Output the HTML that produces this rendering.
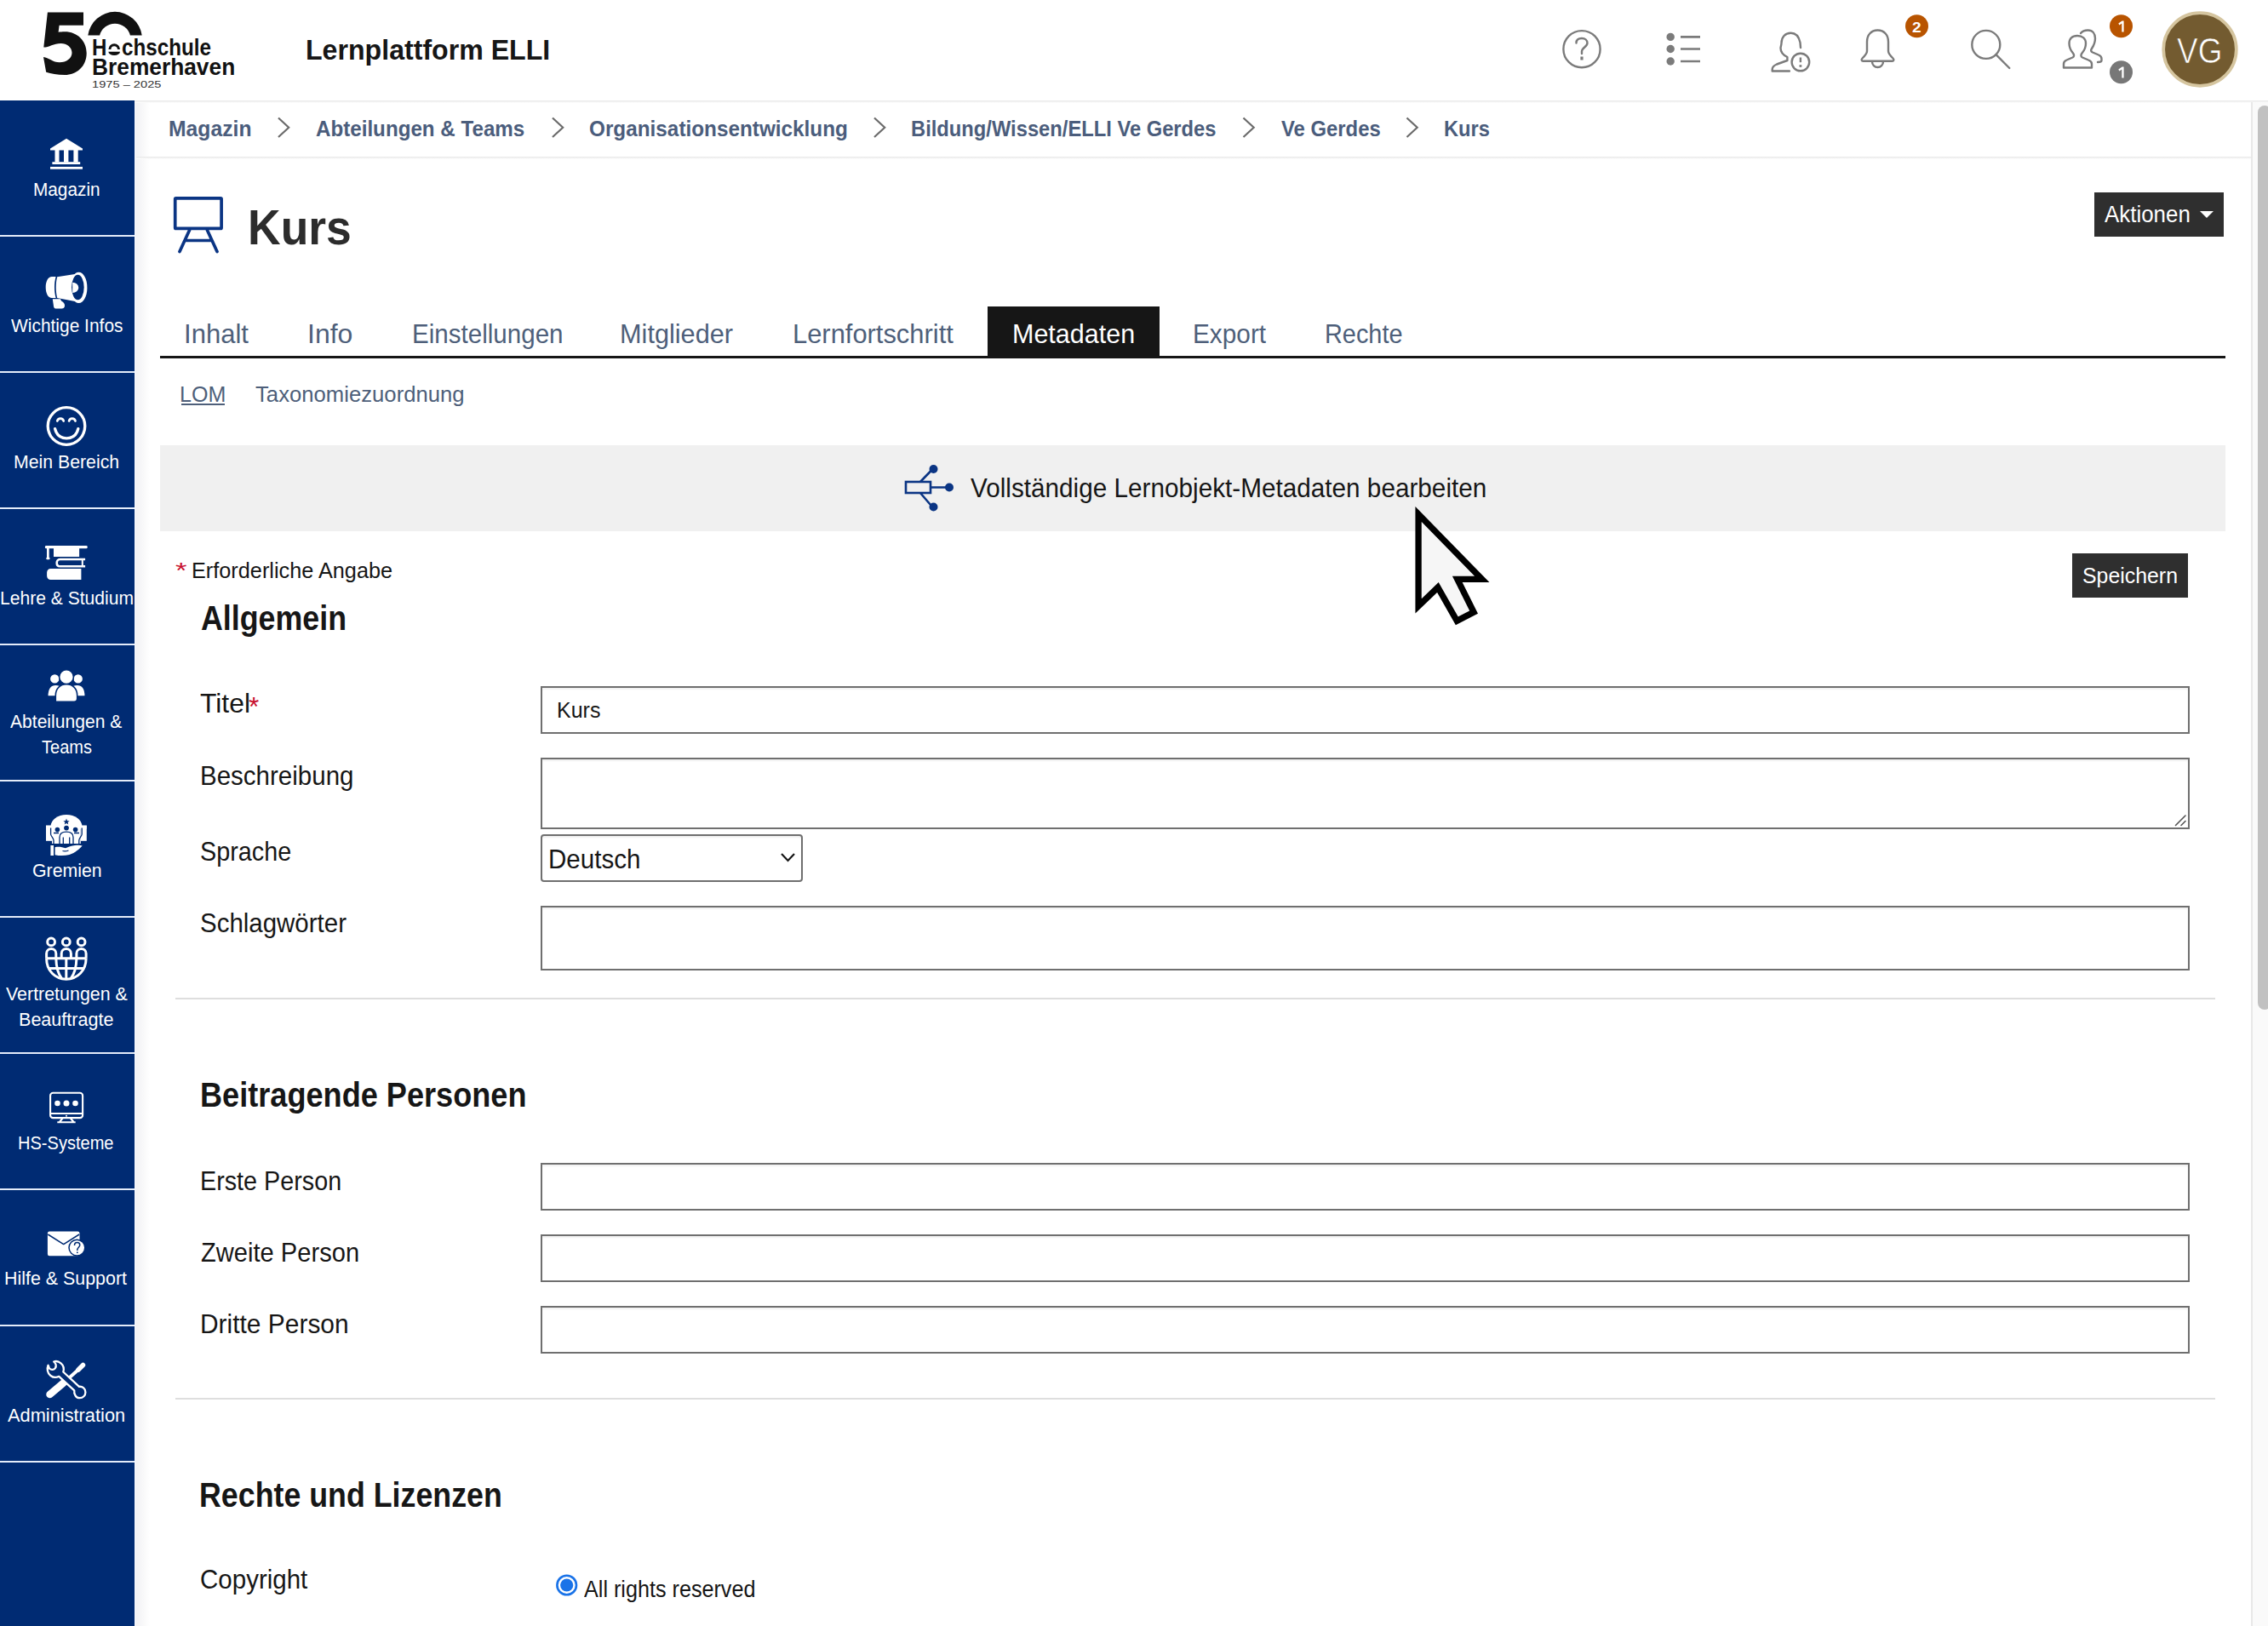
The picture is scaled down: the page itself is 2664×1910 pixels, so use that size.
<!DOCTYPE html>
<html><head><meta charset="utf-8">
<style>
*{box-sizing:border-box;margin:0;padding:0}
html,body{width:2664px;height:1910px;overflow:hidden;background:#fff}
body{position:relative;font-family:"Liberation Sans",sans-serif;color:#161616}
.b{position:absolute}
.t{position:absolute;white-space:nowrap;transform-origin:0 0;font-family:"Liberation Sans",sans-serif}
.sep{position:absolute;left:0;width:158px;height:2px;background:#e4ecfa}
.inp{position:absolute;left:635px;width:1937px;border:2px solid #6f6f6f;background:#fff;box-shadow:inset 0 2px 2px rgba(0,0,0,0.06)}
.hr{position:absolute;left:206px;width:2396px;height:2px;background:#dedede}
svg{position:absolute;left:0;top:0}
</style></head>
<body>
<!-- header shadow -->
<!-- sidebar -->
<div class="b" style="left:0;top:118px;width:158px;height:1792px;background:#002b73"></div>
<div class="sep" style="top:276px"></div>
<div class="sep" style="top:436px"></div>
<div class="sep" style="top:596px"></div>
<div class="sep" style="top:756px"></div>
<div class="sep" style="top:916px"></div>
<div class="sep" style="top:1076px"></div>
<div class="sep" style="top:1236px"></div>
<div class="sep" style="top:1396px"></div>
<div class="sep" style="top:1556px"></div>
<div class="sep" style="top:1716px"></div>
<div class="b" style="left:158px;top:118px;width:2px;height:1792px;background:#f4f6fb"></div>
<div class="b" style="left:160px;top:118px;width:16px;height:1792px;background:linear-gradient(to right,#f2f2f4,#fff)"></div>
<div class="b" style="left:158px;top:118px;width:2506px;height:3px;background:linear-gradient(#e6e6e6,#fff)"></div>
<!-- breadcrumb bottom -->
<div class="b" style="left:160px;top:184px;width:2484px;height:3px;background:linear-gradient(#e6e6e6,#fff)"></div>
<!-- aktionen -->
<div class="b" style="left:2460px;top:226px;width:152px;height:52px;background:#2f2f2f"></div>
<!-- tabs -->
<div class="b" style="left:1160px;top:360px;width:202px;height:61px;background:#161616"></div>
<div class="b" style="left:188px;top:418px;width:2426px;height:3px;background:#161616"></div>
<div class="b" style="left:212.5px;top:474px;width:51.5px;height:2px;background:#4e5f7a"></div>
<!-- grey bar -->
<div class="b" style="left:188px;top:523px;width:2426px;height:101px;background:#f0f0f0"></div>
<!-- speichern -->
<div class="b" style="left:2434px;top:650px;width:136px;height:52px;background:#2f2f2f"></div>
<!-- inputs -->
<div class="inp" style="top:806px;height:56px"></div>
<div class="inp" style="top:890px;height:84px"></div>
<div class="inp" style="top:980px;height:56px;width:308px;border-radius:4px"></div>
<div class="inp" style="top:1064px;height:76px"></div>
<div class="hr" style="top:1172px"></div>
<div class="inp" style="top:1366px;height:56px"></div>
<div class="inp" style="top:1450px;height:56px"></div>
<div class="inp" style="top:1534px;height:56px"></div>
<div class="hr" style="top:1642px"></div>
<!-- scrollbar -->
<div class="b" style="left:2644px;top:120px;width:20px;height:1790px;background:#fafafa;border-left:2px solid #e8e8e8"></div>
<div class="b" style="left:2652px;top:124px;width:16px;height:1062px;background:#c1c1c1;border-radius:8px"></div>

<svg width="2664" height="1910" viewBox="0 0 2664 1910">
<!-- logo -->
<path fill="#111" d="M55.9,14.6 L98,14.6 L98,29.8 L69.6,29.8 L68.6,37.8 C70.5,37.4 73,37.2 76,37.2 C91,37.2 101.7,48 101.7,62.5 C101.7,78 90,88 76,88 C67,88 60,86.7 54.2,84.8 L51,67 C57,67.5 62,73.3 70,73.3 C78,73.3 84.5,68.5 84.5,62 C84.5,55.5 78.5,51 71.5,51 C63,51 57.5,55.6 51.3,55.6 Z"/>
<path d="M128.9,58 A5.3,5.3 0 0 1 139.5,58" fill="none" stroke="#111" stroke-width="3"/>
<path d="M127.4,60.8 A6.8,4.3 0 0 0 141,60.8 Z" fill="#111"/>
<path fill="#111" d="M103.3,41.5 A32,32 0 0 1 166.7,41.5 L152.9,41.5 A18.5,18.5 0 0 0 117.1,41.5 Z"/>
<!-- header icons -->
<g fill="none" stroke="#7b7b7b" stroke-width="2.4" stroke-linecap="round" stroke-linejoin="round">
<circle cx="1858" cy="57.7" r="21.6"/>
<path d="M1851.5,50.5 C1851.5,46.5 1854.5,45 1858,45 C1862,45 1864.5,47.5 1864.5,50.5 C1864.5,55 1858,56 1858,60.5 L1858,63"/>
<path d="M1974,43.4 L1997,43.4 M1974,57.5 L1997,57.5 M1974,72 L1997,72" stroke-width="2.6" stroke-linecap="butt"/>
<path d="M2115,56 L2114.5,50 C2113,43 2109,38.7 2103.5,38.7 C2097,38.7 2092.5,43.5 2092.5,50.5 C2092.5,53 2091.5,55 2091.5,56.5 C2091.5,60 2094,64.5 2099.4,67 L2099.4,71 L2087,75.5 C2083.5,77 2081.7,79 2081.7,81.5 L2081.7,83.5 L2101.9,83.5"/>
<circle cx="2114.9" cy="73" r="10.3"/>
<path d="M2114.9,67.5 L2114.9,73.2" stroke-linecap="butt"/>
<path d="M2205.5,35.5 C2198,35.5 2193,41 2193,49 L2193,60 C2193,63 2190,66 2187.5,68.5 C2186,70 2186.5,71.7 2188.5,71.7 L2222.5,71.7 C2224.5,71.7 2225,70 2223.5,68.5 C2221,66 2218,63 2218,60 L2218,49 C2218,41 2213,35.5 2205.5,35.5 Z"/>
<path d="M2199,72.5 A6.5,6.5 0 0 0 2212,72.5"/>
<circle cx="2332.8" cy="52.4" r="16.5"/>
<path d="M2344.5,64.2 L2360.3,80"/>
<path d="M2424,79.5 L2457,79.5 L2457,75 C2457,73 2455.5,71.5 2453,70.5 L2446,67.5 C2444,66.5 2444,64.5 2445.5,62.5 C2448.5,59 2450,55 2450,51 C2450,45.5 2446,42 2440,42 C2434,42 2430.5,45.5 2430.5,51 C2430.5,55 2432,59 2435,62.5 C2436.5,64.5 2436.5,66.5 2434.5,67.5 L2427.5,70.5 C2425,71.5 2424,73 2424,75 Z"/>
<path d="M2444,39 C2446,36.5 2449.5,35.5 2452.5,35.5 C2458,35.5 2461,39.5 2461,45 C2461,50 2459,54 2457,57 C2455.5,59 2456,60.5 2458,61.5 L2465,64.5 C2467.5,65.5 2468.5,67 2468.5,69 L2468.5,71 C2468.5,72.5 2467,73 2464,73"/>
</g>
<g fill="#7b7b7b">
<rect x="1856.4" y="66.5" width="3.2" height="4" />
<circle cx="1962.2" cy="43.4" r="4.7"/><circle cx="1962.2" cy="57.5" r="4.7"/><circle cx="1962.2" cy="72" r="4.7"/>
<rect x="2113.5" y="76.2" width="2.8" height="2.6"/>
</g>
<circle cx="2251.5" cy="30.8" r="13.5" fill="#b85400"/>
<circle cx="2491.5" cy="30.8" r="13.5" fill="#b85400"/>
<circle cx="2491.5" cy="84.8" r="13.5" fill="#777"/>
<path d="M2488.3,27.6 L2492.6,24.4 L2494.6,24.4 L2494.6,37.6 L2492.3,37.6 L2492.3,27.6 L2489.4,29.6 Z M2488.3,81.6 L2492.6,78.4 L2494.6,78.4 L2494.6,91.6 L2492.3,91.6 L2492.3,81.6 L2489.4,83.6 Z" fill="#fff"/>
<circle cx="2584" cy="58" r="42.8" fill="#735b30" stroke="#d5c59f" stroke-width="3.7"/>
<!-- course icon -->
<g fill="none" stroke="#0b3584" stroke-width="3.7" stroke-linecap="round" stroke-linejoin="round">
<rect x="205.7" y="232.8" width="54.4" height="35.6" rx="1"/>
<path d="M222.5,270.5 L211,295.5 M243.5,270.5 L255,295.5 M217,282.5 L249,282.5"/>
</g>
<!-- grey bar icon -->
<g fill="none" stroke="#0b3584" stroke-width="2.6">
<rect x="1064" y="566" width="29" height="13"/>
<path d="M1093,572.5 L1115,572.5 M1081,566 L1096,550.5 M1081,579 L1096,596.5"/>
</g>
<g fill="#0b3584">
<circle cx="1096.5" cy="551" r="5"/><circle cx="1115" cy="572.5" r="5"/><circle cx="1096.5" cy="595.5" r="5"/>
</g>
<!-- aktionen caret -->
<path d="M2584,248 L2600,248 L2592,256 Z" fill="#fff"/>
<!-- select caret -->
<path d="M918,1003 L925.5,1011 L933,1003" fill="none" stroke="#161616" stroke-width="2.2"/>
<!-- textarea resize -->
<path d="M2555.5,969.5 L2567,958 M2562,969.5 L2567,964.5" stroke="#555" stroke-width="1.6" stroke-linecap="round"/>
<!-- radio -->
<circle cx="665.7" cy="1862" r="11.3" fill="#fff" stroke="#1a73e8" stroke-width="2.6"/>
<circle cx="665.7" cy="1862" r="7.6" fill="#1a73e8"/>
<!-- sidebar icons -->
<g fill="#fff">
<path d="M78,162.7 L97,174.5 L97,176.5 L59,176.5 L59,174.5 Z"/>
<rect x="64.5" y="176" width="5" height="14.5"/><rect x="75" y="176" width="5.4" height="14.5"/><rect x="86.4" y="176" width="5.3" height="14.5"/>
<rect x="61.4" y="190.2" width="32.8" height="2.8"/><rect x="59" y="195.9" width="38" height="2.8"/>
<!-- megaphone -->
<path d="M65.6,325.1 L61,325.1 C56.5,325.1 53.7,330.5 53.7,337.5 C53.7,344.5 56.5,350 61,350 L65.6,350 C64.5,346 64,341.8 64,337.5 C64,333.2 64.5,329 65.6,325.1 Z"/>
<path d="M67.2,325.3 L88,322 L88,354 L67.2,350 C66.2,346 65.7,341.8 65.7,337.5 C65.7,333.2 66.2,329 67.2,325.3 Z"/>
<path d="M61.8,351.2 L71,351.2 L72,353.5 C75,355 76.3,357 76,359.5 C75.8,361.5 74.5,362.4 72.5,362.4 L65.3,362.4 C64,362.4 63.3,361.5 63.1,360.3 Z"/>
<ellipse cx="92.5" cy="337.9" rx="9.9" ry="18.1"/>
</g>
<ellipse cx="91.4" cy="337.6" rx="7.3" ry="14.75" fill="#002b73"/>
<path d="M85.2,331.8 A7.1,6.1 0 0 1 85.2,344 Z" fill="#fff"/>
<!-- smiley -->
<g fill="none" stroke="#fff" stroke-width="3.3" stroke-linecap="round">
<circle cx="78" cy="500.5" r="21.8"/>
<path d="M64.6,503.6 C66.5,511.5 72,514.8 78.2,514.8 C84.5,514.8 90,511.5 91.8,503.6"/>
<path d="M67.3,494.5 A3.8,3.8 0 0 1 74.7,494.5 M81.1,494.5 A3.8,3.8 0 0 1 88.5,494.5" stroke-width="2.8"/>
</g>
<!-- cap & books -->
<g fill="#fff">
<rect x="52.9" y="641" width="49.8" height="3.2" rx="1.3"/>
<rect x="63" y="643.5" width="30.1" height="10.5"/>
<rect x="55" y="643.5" width="2.7" height="12.5"/>
<rect x="54.3" y="654.8" width="4.2" height="2.5" rx="1"/>
<path d="M55.1,668 L95.4,668 L95.4,681 L59.5,681 C57,681 55.1,679 55.1,676.5 L55.1,672.5 C55.1,670 57,668 59.5,668 Z"/>
</g>
<path d="M100.1,657 L70.5,657 C68,657 66.7,659 66.7,661.2 C66.7,663.4 68,665.3 70.5,665.3 L100.1,665.3" fill="none" stroke="#fff" stroke-width="2.6"/>
<path d="M96.8,657 L96.8,665.3" stroke="#fff" stroke-width="2"/>
<!-- team -->
<g fill="#fff" stroke="#002b73" stroke-width="1.6">
<circle cx="64.3" cy="797.4" r="6"/>
<circle cx="91.7" cy="797.4" r="6"/>
<path d="M55.7,818 C55.7,809 59.5,804.2 65.5,804.2 C69,804.2 71.5,805.5 73,807.5 L69,818 Z"/>
<path d="M100.3,818 C100.3,809 96.5,804.2 90.5,804.2 C87,804.2 84.5,805.5 83,807.5 L87,818 Z"/>
<circle cx="78" cy="795.2" r="8.4"/>
<path d="M65.3,824.3 L65.3,817 C65.3,809 70.5,803.8 78,803.8 C85.5,803.8 90.7,809 90.7,817 L90.7,820.5 C90.7,823 89.5,824.3 87,824.3 Z"/>
</g>
<!-- gremien -->
<g fill="#fff">
<path d="M59.6,970.5 A18.4,13.6 0 0 1 96.4,970.5 Z"/>
<rect x="54" y="969.7" width="47.8" height="4"/>
<rect x="54" y="969.7" width="7" height="18.1"/>
<rect x="94.8" y="969.7" width="7" height="18.1"/>
<rect x="61" y="973" width="33.8" height="18"/>
<rect x="59.4" y="993" width="3.6" height="12"/>
<path d="M64.6,995.2 C69,994.2 73,995 77,996.2 C80,994.8 84,993.5 88,993 C91.5,992.6 94.5,992.6 96.7,993.6 C93,997.5 88.5,1001.8 81.5,1004 C75.5,1005.6 69.5,1005.3 64.6,1004.2 Z"/>
</g>
<g fill="#002b73">
<circle cx="67.4" cy="974.6" r="2.8"/><circle cx="78" cy="972.6" r="2.9"/><circle cx="88.6" cy="974.6" r="2.8"/>
<path d="M78,961.6 L79,964.2 L81.6,964.3 L79.6,966 L80.3,968.6 L78,967.1 L75.7,968.6 L76.4,966 L74.4,964.3 L77,964.2 Z"/>
</g>
<g fill="none" stroke="#002b73" stroke-width="1.3">
<path d="M59.6,972.5 L59.6,980 C60,982.5 62.5,984 63,987 L63,991.5 M96.2,972.5 L96.2,980 C95.8,982.5 93.3,984 92.8,987 L92.8,991.5"/>
<path d="M63,978.5 L69,978.5 M87,978.5 L93,978.5"/>
<path d="M70,991.5 L70,983.5 C70,979 73.5,977.2 78,977.2 C82.5,977.2 86,979 86,983.5 L86,991.5 M74.3,983.5 L74.3,991.5 M81.7,983.5 L81.7,991.5"/>
<path d="M73.5,999.5 C75,1000 78,1000 80.5,999"/>
</g>
<!-- vertretungen -->
<g fill="none" stroke="#fff" stroke-width="3">
<circle cx="60.1" cy="1106.4" r="4.4"/><circle cx="77.8" cy="1106.4" r="4.4"/><circle cx="95.6" cy="1106.4" r="4.4"/>
<path d="M54.6,1125.8 L54.6,1120 A5.6,5.6 0 0 1 65.8,1120 L65.8,1125.8 M72.2,1125.8 L72.2,1120 A5.6,5.6 0 0 1 83.4,1120 L83.4,1125.8 M89.9,1125.8 L89.9,1120 A5.6,5.6 0 0 1 101.1,1120 L101.1,1125.8"/>
<path d="M54.6,1125.8 L101.1,1125.8 M56.5,1137.5 L99.2,1137.5 M77.8,1125.8 L77.8,1150"/>
<path d="M54.6,1125.8 C54.6,1140 64.5,1150.2 77.8,1150.2 C91.1,1150.2 101.1,1140 101.1,1125.8"/>
<path d="M65.8,1125.8 C66,1136 68,1143.5 72.5,1149.5 M89.9,1125.8 C89.7,1136 87.7,1143.5 83.2,1149.5"/>
</g>
<!-- monitor -->
<g fill="none" stroke="#fff" stroke-width="2.1">
<rect x="59.1" y="1283.7" width="38" height="29.4" rx="3.2"/>
<path d="M59.1,1308 L97.1,1308 M73.5,1313.5 L70,1318 M82.9,1313.5 L86.4,1318 M67.3,1318.3 L88.7,1318.3"/>
</g>
<g fill="#fff"><circle cx="67.5" cy="1296" r="3.3"/><circle cx="78" cy="1296" r="3.5"/><circle cx="88.5" cy="1296" r="3.3"/><circle cx="78" cy="1310.8" r="1"/></g>
<!-- envelope -->
<rect x="55.9" y="1446.6" width="37.6" height="28.6" rx="2.2" fill="#fff"/>
<path d="M56.3,1450 L74.7,1461.6 L93.1,1450" fill="none" stroke="#002b73" stroke-width="1.5" stroke-linejoin="round"/>
<circle cx="90.4" cy="1465.6" r="9.4" fill="#fff" stroke="#002b73" stroke-width="1.5"/>
<path d="M87.5,1463 C87.5,1460.6 89,1459.6 90.6,1459.6 C92.5,1459.6 93.8,1460.8 93.8,1462.5 C93.8,1465 90.8,1465.5 90.8,1468 L90.8,1469" fill="none" stroke="#002b73" stroke-width="1.5"/>
<rect x="90" y="1470.5" width="1.6" height="1.6" fill="#002b73"/>
<!-- tools -->
<g stroke="#fff" stroke-linecap="round" fill="none">
<path d="M58.5,1638 L74.5,1624.5" stroke-width="8.5"/>
<path d="M74,1625 L93,1608" stroke-width="3.8"/>
<path d="M92,1609 L97.5,1603.5" stroke-width="5.5"/>
</g>
<path d="M56.5,1603.8 C55,1607.5 55.5,1613 59.5,1616 C62.5,1618.3 66.5,1618.2 69.3,1616.8 L87.3,1633.3 C86.5,1638 89.5,1642.2 93.6,1642.2 C97.5,1642.2 100.4,1639.2 100.4,1635.4 C100.4,1631.2 97,1628.4 93,1628.8 L74.3,1611.5 C75.3,1608 74.5,1603.8 71.5,1601.3 C68.8,1599 65.5,1598.7 63.2,1599.5 C65.5,1601.5 66.5,1604.5 64.8,1607.2 C63,1609.5 59.8,1609.2 58,1607.5 Z" fill="#002b73" stroke="#fff" stroke-width="2.3" stroke-linejoin="round"/>
<!-- breadcrumb chevrons -->
<path d="M327,138.5 L339.2,149.8 L327,161 M649,138.5 L661.2,149.8 L649,161 M1027,138.5 L1039.2,149.8 L1027,161 M1460.5,138.5 L1472.7,149.8 L1460.5,161 M1652.5,138.5 L1664.7,149.8 L1652.5,161" fill="none" stroke="#6b6b6b" stroke-width="2.2"/>
</svg>
<span class="t" style="left:107.71px;top:43px;font-size:27px;line-height:27px;font-weight:bold;color:#111111;transform:scaleX(0.8937)">H</span>
<span class="t" style="left:142.80px;top:43px;font-size:27px;line-height:27px;font-weight:bold;color:#111111;transform:scaleX(0.8965)">chschule</span>
<span class="t" style="left:107.55px;top:66px;font-size:27px;line-height:27px;font-weight:bold;color:#111111;transform:scaleX(0.9746)">Bremerhaven</span>
<span class="t" style="left:107.83px;top:94px;font-size:11.5px;line-height:11.5px;font-weight:normal;color:#333333;transform:scaleX(1.2730)">1975 – 2025</span>
<span class="t" style="left:358.75px;top:42px;font-size:33px;line-height:33px;font-weight:bold;color:#161616;transform:scaleX(0.9732)">Lernplattform ELLI</span>
<span class="t" style="left:2557.00px;top:39px;font-size:42px;line-height:42px;font-weight:normal;color:#ffffff;transform:scaleX(0.8793);-webkit-text-stroke:0.7px #735b30">VG</span>
<span class="t" style="left:2245.88px;top:24px;font-size:17px;line-height:17px;font-weight:bold;color:#ffffff;transform:scaleX(1.1250)">2</span>
<span class="t" style="left:38.67px;top:213px;font-size:21.5px;line-height:21.5px;font-weight:normal;color:#ffffff;transform:scaleX(0.9667)">Magazin</span>
<span class="t" style="left:12.70px;top:373px;font-size:21.5px;line-height:21.5px;font-weight:normal;color:#ffffff;transform:scaleX(0.9739)">Wichtige Infos</span>
<span class="t" style="left:15.82px;top:533px;font-size:21.5px;line-height:21.5px;font-weight:normal;color:#ffffff;transform:scaleX(0.9893)">Mein Bereich</span>
<span class="t" style="left:-0.46px;top:693px;font-size:21.5px;line-height:21.5px;font-weight:normal;color:#ffffff;transform:scaleX(0.9803)">Lehre &amp; Studium</span>
<span class="t" style="left:12.30px;top:838px;font-size:21.5px;line-height:21.5px;font-weight:normal;color:#ffffff;transform:scaleX(0.9806)">Abteilungen &amp;</span>
<span class="t" style="left:49.00px;top:868px;font-size:21.5px;line-height:21.5px;font-weight:normal;color:#ffffff;transform:scaleX(0.9317)">Teams</span>
<span class="t" style="left:37.51px;top:1013px;font-size:21.5px;line-height:21.5px;font-weight:normal;color:#ffffff;transform:scaleX(0.9912)">Gremien</span>
<span class="t" style="left:6.80px;top:1158px;font-size:21.5px;line-height:21.5px;font-weight:normal;color:#ffffff;transform:scaleX(0.9958)">Vertretungen &amp;</span>
<span class="t" style="left:21.99px;top:1188px;font-size:21.5px;line-height:21.5px;font-weight:normal;color:#ffffff;transform:scaleX(1.0028)">Beauftragte</span>
<span class="t" style="left:21.14px;top:1333px;font-size:21.5px;line-height:21.5px;font-weight:normal;color:#ffffff;transform:scaleX(0.9322)">HS-Systeme</span>
<span class="t" style="left:4.81px;top:1492px;font-size:21.5px;line-height:21.5px;font-weight:normal;color:#ffffff;transform:scaleX(0.9958)">Hilfe &amp; Support</span>
<span class="t" style="left:9.30px;top:1653px;font-size:21.5px;line-height:21.5px;font-weight:normal;color:#ffffff;transform:scaleX(1.0141)">Administration</span>
<span class="t" style="left:197.60px;top:138px;font-size:26px;line-height:26px;font-weight:bold;color:#4b5d7c;transform:scaleX(0.9505)">Magazin</span>
<span class="t" style="left:370.57px;top:138px;font-size:26px;line-height:26px;font-weight:bold;color:#4b5d7c;transform:scaleX(0.9294)">Abteilungen &amp; Teams</span>
<span class="t" style="left:692.07px;top:138px;font-size:26px;line-height:26px;font-weight:bold;color:#4b5d7c;transform:scaleX(0.9350)">Organisationsentwicklung</span>
<span class="t" style="left:1070.17px;top:138px;font-size:26px;line-height:26px;font-weight:bold;color:#4b5d7c;transform:scaleX(0.9128)">Bildung/Wissen/ELLI Ve Gerdes</span>
<span class="t" style="left:1505.40px;top:138px;font-size:26px;line-height:26px;font-weight:bold;color:#4b5d7c;transform:scaleX(0.9175)">Ve Gerdes</span>
<span class="t" style="left:1696.18px;top:138px;font-size:26px;line-height:26px;font-weight:bold;color:#4b5d7c;transform:scaleX(0.9107)">Kurs</span>
<span class="t" style="left:291.11px;top:238px;font-size:58px;line-height:58px;font-weight:bold;color:#2c2c2c;transform:scaleX(0.9222)">Kurs</span>
<span class="t" style="left:2472.00px;top:239px;font-size:27px;line-height:27px;font-weight:normal;color:#ffffff;transform:scaleX(0.9592)">Aktionen</span>
<span class="t" style="left:215.65px;top:377px;font-size:30.5px;line-height:30.5px;font-weight:normal;color:#4e5f7a;transform:scaleX(1.0181)">Inhalt</span>
<span class="t" style="left:360.55px;top:377px;font-size:30.5px;line-height:30.5px;font-weight:normal;color:#4e5f7a;transform:scaleX(1.0489)">Info</span>
<span class="t" style="left:483.56px;top:377px;font-size:30.5px;line-height:30.5px;font-weight:normal;color:#4e5f7a;transform:scaleX(0.9693)">Einstellungen</span>
<span class="t" style="left:727.99px;top:377px;font-size:30.5px;line-height:30.5px;font-weight:normal;color:#4e5f7a;transform:scaleX(1.0062)">Mitglieder</span>
<span class="t" style="left:930.68px;top:377px;font-size:30.5px;line-height:30.5px;font-weight:normal;color:#4e5f7a;transform:scaleX(1.0125)">Lernfortschritt</span>
<span class="t" style="left:1189.00px;top:377px;font-size:30.5px;line-height:30.5px;font-weight:normal;color:#ffffff;transform:scaleX(1.0000)">Metadaten</span>
<span class="t" style="left:1401.05px;top:377px;font-size:30.5px;line-height:30.5px;font-weight:normal;color:#4e5f7a;transform:scaleX(0.9767)">Export</span>
<span class="t" style="left:1556.11px;top:377px;font-size:30.5px;line-height:30.5px;font-weight:normal;color:#4e5f7a;transform:scaleX(0.9468)">Rechte</span>
<span class="t" style="left:210.77px;top:450px;font-size:26px;line-height:26px;font-weight:normal;color:#4e5f7a;transform:scaleX(0.9642)">LOM</span>
<span class="t" style="left:300.00px;top:450px;font-size:26px;line-height:26px;font-weight:normal;color:#4e5f7a;transform:scaleX(0.9879)">Taxonomiezuordnung</span>
<span class="t" style="left:1139.50px;top:557px;font-size:32px;line-height:32px;font-weight:normal;color:#161616;transform:scaleX(0.9286)">Vollständige Lernobjekt-Metadaten bearbeiten</span>
<span class="t" style="left:205.67px;top:657px;font-size:26px;line-height:26px;font-weight:normal;color:#c8102e;transform:scaleX(1.3333)">*</span>
<span class="t" style="left:224.76px;top:657px;font-size:26px;line-height:26px;font-weight:normal;color:#161616;transform:scaleX(0.9721)">Erforderliche Angabe</span>
<span class="t" style="left:235.91px;top:706px;font-size:40px;line-height:40px;font-weight:bold;color:#161616;transform:scaleX(0.8947)">Allgemein</span>
<span class="t" style="left:2445.95px;top:663px;font-size:26.3px;line-height:26.3px;font-weight:normal;color:#ffffff;transform:scaleX(0.9457)">Speichern</span>
<span class="t" style="left:235.39px;top:811px;font-size:31.5px;line-height:31.5px;font-weight:normal;color:#161616;transform:scaleX(1.0109)">Titel</span>
<span class="t" style="left:292.00px;top:815px;font-size:31.5px;line-height:31.5px;font-weight:normal;color:#c8102e;transform:scaleX(1.0000)">*</span>
<span class="t" style="left:234.53px;top:896px;font-size:31.5px;line-height:31.5px;font-weight:normal;color:#161616;transform:scaleX(0.9370)">Beschreibung</span>
<span class="t" style="left:234.57px;top:985px;font-size:31.5px;line-height:31.5px;font-weight:normal;color:#161616;transform:scaleX(0.9132)">Sprache</span>
<span class="t" style="left:234.53px;top:1069px;font-size:31.5px;line-height:31.5px;font-weight:normal;color:#161616;transform:scaleX(0.9354)">Schlagwörter</span>
<span class="t" style="left:654.04px;top:822px;font-size:25.5px;line-height:25.5px;font-weight:normal;color:#161616;transform:scaleX(0.9800)">Kurs</span>
<span class="t" style="left:644.06px;top:994px;font-size:30.5px;line-height:30.5px;font-weight:normal;color:#161616;transform:scaleX(0.9694)">Deutsch</span>
<span class="t" style="left:234.79px;top:1266px;font-size:40px;line-height:40px;font-weight:bold;color:#161616;transform:scaleX(0.9033)">Beitragende Personen</span>
<span class="t" style="left:235.18px;top:1372px;font-size:31.5px;line-height:31.5px;font-weight:normal;color:#161616;transform:scaleX(0.9124)">Erste Person</span>
<span class="t" style="left:236.08px;top:1456px;font-size:31.5px;line-height:31.5px;font-weight:normal;color:#161616;transform:scaleX(0.9242)">Zweite Person</span>
<span class="t" style="left:235.10px;top:1540px;font-size:31.5px;line-height:31.5px;font-weight:normal;color:#161616;transform:scaleX(0.9500)">Dritte Person</span>
<span class="t" style="left:234.32px;top:1736px;font-size:40px;line-height:40px;font-weight:bold;color:#161616;transform:scaleX(0.8944)">Rechte und Lizenzen</span>
<span class="t" style="left:235.13px;top:1840px;font-size:31.5px;line-height:31.5px;font-weight:normal;color:#161616;transform:scaleX(0.9368)">Copyright</span>
<span class="t" style="left:686.00px;top:1854px;font-size:27px;line-height:27px;font-weight:normal;color:#161616;transform:scaleX(0.9322)">All rights reserved</span>
<!-- cursor -->
<svg width="2664" height="1910" viewBox="0 0 2664 1910" style="z-index:10">
<path d="M1666.1,604 L1666.1,712 L1688.9,690 L1711.3,729.3 L1731.1,719.1 L1711.8,680.4 L1740.8,680.4 Z" fill="#f6f6f6" stroke="#000" stroke-width="7.3" stroke-miterlimit="10" stroke-linejoin="miter"/>
</svg>
</body></html>
